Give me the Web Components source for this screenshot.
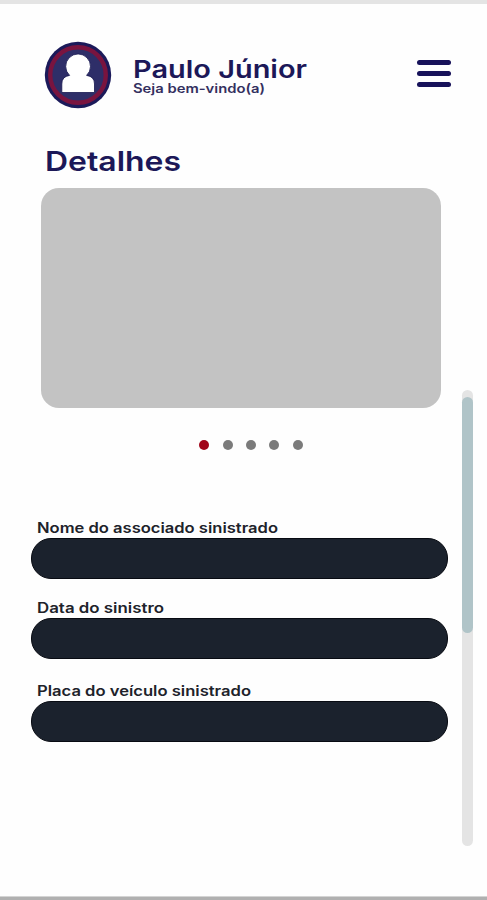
<!DOCTYPE html>
<html lang="pt-BR">
<head>
<meta charset="utf-8">
<title>Detalhes</title>
<style>
  body {
    margin: 0;
    background: #fefefe;
    font-family: Inter, "Open Sans", sans-serif;
  }
</style>
</head>
<body>
<details-page>
  <app-header slot="header" name="Paulo Júnior" greeting="Seja bem-vindo(a)"></app-header>
  <photo-carousel heading="Detalhes" count="5"></photo-carousel>
  <form-field label="Nome do associado sinistrado" width="241"></form-field>
  <form-field label="Data do sinistro" width="127" style="--gap: 19px"></form-field>
  <form-field label="Placa do veículo sinistrado" width="214" style="--gap: 21.5px"></form-field>
  <scroll-rail slot="rail"></scroll-rail>
</details-page>

<script>
// One line of text stretched to a fixed width
class FitText extends HTMLElement {
  constructor() {
    super();
    this.attachShadow({ mode: 'open' });
  }

  connectedCallback() {
    const width = this.getAttribute('width');
    const size = this.getAttribute('size');
    const height = this.getAttribute('height');
    const base = this.getAttribute('base');
    this.shadowRoot.innerHTML = `
      <style>
        :host { display: block; height: ${height}px; }
        svg { display: block; overflow: visible; }
        text { fill: currentColor; }
      </style>
      <svg width="${width}" height="${height}">
        <text x="0" y="${base}" font-size="${size}" textLength="${width}" lengthAdjust="spacingAndGlyphs">${this.getAttribute('text')}</text>
      </svg>
    `;
  }
}

class UserAvatar extends HTMLElement {
  constructor() {
    super();
    this.attachShadow({ mode: 'open' }).innerHTML = `
      <style>
        :host { display: block; width: 68px; height: 68px; }
        svg { display: block; }
      </style>
      <svg width="68" height="68" viewBox="0 0 68 68">
        <circle cx="34" cy="34" r="33.2" fill="#1b1a5a"/>
        <circle cx="34" cy="34" r="27.8" fill="#2e2e68" stroke="#79143f" stroke-width="4.4"/>
        <path d="M17.8 51.5V43Q17.8 35.4 25.6 34.4A12.4 12.4 0 1 1 42.6 34.4Q50.5 35.4 50.5 43V51.5Z" fill="#fff" stroke="#17164f" stroke-width=".8"/>
      </svg>
    `;
  }
}

class MenuButton extends HTMLElement {
  constructor() {
    super();
    this.attachShadow({ mode: 'open' }).innerHTML = `
      <style>
        :host { display: flex; flex-direction: column; gap: 6px; width: 33.5px; }
        span { height: 5.3px; border-radius: 3px; background: #17125a; }
      </style>
      <span></span><span></span><span></span>
    `;
  }
}

class AppHeader extends HTMLElement {
  constructor() {
    super();
    this.attachShadow({ mode: 'open' });
  }

  connectedCallback() {
    this.shadowRoot.innerHTML = `
      <style>
        :host {
          display: flex;
          align-items: flex-start;
          height: 105px;
          padding: 37px 36.5px 0 44px;
          box-sizing: border-box;
          color: #1c1858;
        }
        .who { flex: 1; padding: 14px 0 0 21px; }
        .name { font-weight: 600; }
        .greeting { font-weight: 600; color: #34305f; }
        menu-button { margin-top: 18.5px; }
      </style>
      <user-avatar></user-avatar>
      <div class="who">
        <fit-text class="name" text="${this.getAttribute('name')}" width="174" size="24.5" height="26" base="22.8"></fit-text>
        <fit-text class="greeting" text="${this.getAttribute('greeting')}" width="132" size="12.8" height="16" base="12.4"></fit-text>
      </div>
      <menu-button></menu-button>
    `;
  }
}

class PhotoCarousel extends HTMLElement {
  constructor() {
    super();
    this.attachShadow({ mode: 'open' });
  }

  connectedCallback() {
    const dots = '<i></i>'.repeat(Number(this.getAttribute('count')));
    this.shadowRoot.innerHTML = `
      <style>
        :host { display: block; height: 409px; }
        .title { padding: 37px 0 0 45.2px; color: #1c1858; font-weight: 600; }
        .photo {
          width: 400px;
          height: 219.5px;
          margin: 9.4px 0 0 40.5px;
          border-radius: 18px;
          background: #c3c3c3;
        }
        .dots {
          display: flex;
          gap: 13.3px;
          padding: 32px 0 0 199.4px;
        }
        i { width: 10px; height: 10px; border-radius: 50%; background: #7b7b7b; }
        i:first-child { background: #a00418; }
      </style>
      <fit-text class="title" text="${this.getAttribute('heading')}" width="136" size="27.5" height="33" base="25"></fit-text>
      <div class="photo"></div>
      <div class="dots">${dots}</div>
    `;
  }
}

class FormField extends HTMLElement {
  constructor() {
    super();
    this.attachShadow({ mode: 'open' });
  }

  connectedCallback() {
    this.shadowRoot.innerHTML = `
      <style>
        :host { display: block; margin-top: var(--gap, 0); }
        .label { padding-left: 36.5px; font-weight: 600; color: #20222a; }
        .value {
          width: 417px;
          height: 41px;
          margin-left: 30.5px;
          box-sizing: border-box;
          border: 1px solid #080b12;
          border-radius: 20px;
          background: #1b222d;
        }
      </style>
      <fit-text class="label" text="${this.getAttribute('label')}" width="${this.getAttribute('width')}" size="14" height="20" base="14.5"></fit-text>
      <div class="value"></div>
    `;
  }
}

class ScrollRail extends HTMLElement {
  constructor() {
    super();
    this.attachShadow({ mode: 'open' }).innerHTML = `
      <style>
        :host {
          display: block;
          width: 11.5px;
          height: 456px;
          box-sizing: border-box;
          padding-top: 7px;
          border-radius: 6px;
          background: #e4e4e4;
        }
        div { height: 236px; margin: 0 .5px; border-radius: 6px; background: #b0c4c8; }
      </style>
      <div></div>
    `;
  }
}

class DetailsPage extends HTMLElement {
  constructor() {
    super();
    this.attachShadow({ mode: 'open' }).innerHTML = `
      <style>
        :host {
          display: grid;
          grid-template-columns: 461.5px 1fr;
          grid-template-rows: 105px 1fr;
          height: 900px;
          box-sizing: border-box;
          border-top: 4px solid #e4e4e4;
          border-bottom: 3px solid #b0b0b0;
          box-shadow: inset 0 -1px #d4d4d4;
          overflow: hidden;
        }
        header { grid-column: 1 / 3; }
        aside { padding-top: 281px; }
      </style>
      <header><slot name="header"></slot></header>
      <main><slot></slot></main>
      <aside><slot name="rail"></slot></aside>
    `;
  }
}

customElements.define('fit-text', FitText);
customElements.define('user-avatar', UserAvatar);
customElements.define('menu-button', MenuButton);
customElements.define('app-header', AppHeader);
customElements.define('photo-carousel', PhotoCarousel);
customElements.define('form-field', FormField);
customElements.define('scroll-rail', ScrollRail);
customElements.define('details-page', DetailsPage);
</script>
</body>
</html>
